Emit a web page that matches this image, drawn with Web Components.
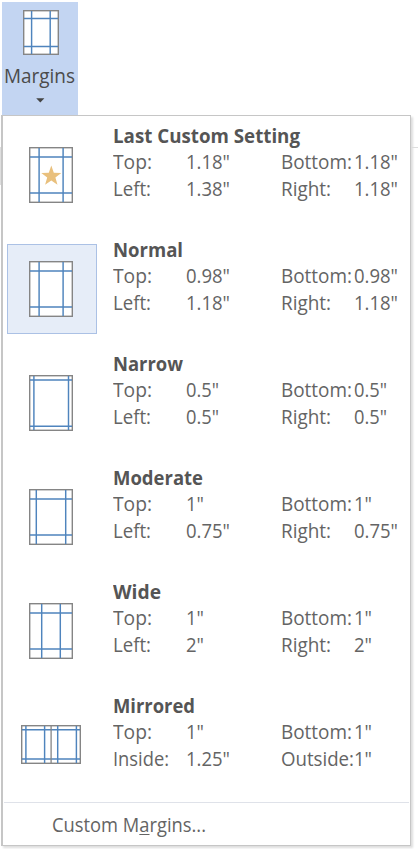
<!DOCTYPE html>
<html lang="en"><head><meta charset="utf-8"><title>Margins</title>
<style>html,body{margin:0;height:849px;overflow:hidden;background:#fff;font-family:"Open Sans","Noto Sans",sans-serif;color:#646464}</style></head>
<body><margins-app></margins-app>
<script>
// Text run condensed or expanded to a given width (w attribute, px).
class FitText extends HTMLElement{
  connectedCallback(){
    const r=this.attachShadow({mode:'open'});
    r.innerHTML='<style>:host{display:block;white-space:nowrap;width:0}span{display:inline-block;transform-origin:0 50%}</style><span><slot></slot></span>';
    const s=r.querySelector('span'),w=+this.getAttribute('w');
    if(w&&s.offsetWidth)s.style.transform='scaleX('+w/s.getBoundingClientRect().width+')';
  }
}
// Page thumbnail: size, vertical and horizontal guide positions.
class PageIcon extends HTMLElement{
  connectedCallback(){
    const [w,h]=this.getAttribute('size').split(' ').map(Number);
    const n=a=>(this.getAttribute(a)||'').split(' ').filter(Boolean).map(Number);
    const v=n('v').map(x=>`M${x} 1V${h-1}`).join(''),z=n('h').map(y=>`M1 ${y}H${w-1}`).join('');
    const mid=n('mid').map(x=>`<path d="M${x} 1V${h-1}" stroke="#858585" stroke-width="1.3"/>`).join('');
    const star=this.hasAttribute('star')?'<path d="M22.3 18.6L24.8 25.7L32.3 25.9L26.4 30.5L28.5 37.8L22.3 33.6L16.1 37.8L18.2 30.5L12.3 25.9L19.8 25.7Z" fill="#e9c07d"/>':'';
    this.attachShadow({mode:'open'}).innerHTML=`<style>:host{display:block;flex:none}svg{display:block}</style>
    <svg width="${w}" height="${h}" viewBox="0 0 ${w} ${h}" fill="none"><rect x=".7" y=".7" width="${w-1.4}" height="${h-1.4}" fill="#fff" stroke="#858585" stroke-width="1.4"/><path d="${v+z}" stroke="#4f84bd" stroke-width="1.45"/>${mid}${star}</svg>`;
  }
}
class MarginButton extends HTMLElement{
  connectedCallback(){
    this.attachShadow({mode:'open'}).innerHTML=`<style>:host{display:flex;flex-direction:column;align-items:flex-start;box-sizing:border-box;width:76px;height:113px;margin:2px 0 0 2px;background:#c3d5f2;padding-top:8px;color:#4b4b4b;font-size:20px;line-height:27px}
    page-icon{margin-left:21px}fit-text{margin:7px 0 0 2px}.a{margin:9px 0 0 34px;display:block}</style>
    <page-icon size="36 45" v="8.6 27.2" h="8.5 36.5"></page-icon><fit-text w="71">Margins</fit-text>
    <svg class="a" width="9" height="5"><path d="M.2 .3H8.4L4.3 4.6Z" fill="#444"/></svg>`;
  }
}
class MarginOption extends HTMLElement{
  connectedCallback(){
    const c=JSON.parse(this.getAttribute('data'));
    const t=(s,w,k)=>`<fit-text w="${w}" class="${k||''}">${s}</fit-text>`;
    const W={'Top:':39,'Left:':38,'Inside:':56,'Bottom:':71,'Right:':50,'Outside:':73,'1"':18,'2"':18,'0.5"':33};
    const cell=s=>t(s,W[s]||44);
    this.attachShadow({mode:'open'}).innerHTML=`<style>:host{display:grid;grid-template-columns:91px 1fr;column-gap:15px;height:114px;box-sizing:border-box;padding-left:4px}
    .pic{box-sizing:border-box;width:90px;height:90px;margin-top:14px;padding:0 2px 1px 0;display:flex;align-items:center;justify-content:center;border:1px solid transparent}
    .pic.sel{background:#e6edf8;border-color:#abc1e5}
    .txt{display:grid;grid-template-columns:73px 95px 73px 1fr;grid-template-rows:26px 27px 26px;align-content:start;padding-top:6px;font-size:20px;line-height:27px}
    .title{grid-column:1/-1;font-weight:700;color:#555}</style>
    <div class="pic ${c.sel?'sel':''}"><page-icon size="${c.size||'44 56'}" v="${c.v}" h="${c.h}" ${c.mid?`mid="${c.mid}"`:''} ${c.star?'star':''}></page-icon></div>
    <div class="txt">${t(c.name,c.w,'title')}${c.cells.map(cell).join('')}</div>`;
  }
}
class MarginMenu extends HTMLElement{
  connectedCallback(){
    const L=['Top:','Bottom:','Left:','Right:'];
    const o=(name,w,vals,v,h,x={})=>({name,w,v,h,cells:(x.labels||L).flatMap((l,i)=>[l,vals[i]]),...x});
    const items=[
      o('Last Custom Setting',187,['1.18"','1.18"','1.38"','1.18"'],'10.1 34.1','10 46',{star:1}),
      o('Normal',70,['0.98"','0.98"','1.18"','1.18"'],'10.1 34.1','10 46',{sel:1}),
      o('Narrow',70,['0.5"','0.5"','0.5"','0.5"'],'4.9 39.5','5 51.3'),
      o('Moderate',90,['1"','1"','0.75"','0.75"'],'7.3 36.7','10 46'),
      o('Wide',48,['1"','1"','2"','2"'],'12.7 31.3','10 46'),
      o('Mirrored',82,['1"','1"','1.25"','1"'],'4.9 23.6 36.7 55.4','4.7 34',{labels:['Top:','Bottom:','Inside:','Outside:'],size:'60 39',mid:'30.1'})];
    const esc=s=>s.replace(/&/g,'&amp;').replace(/"/g,'&quot;');
    this.attachShadow({mode:'open'}).innerHTML=`<style>:host{display:block;box-sizing:border-box;width:410px;height:731px;margin-left:1px;background:#fff;border:solid #c6c6c6;border-width:1px 1px 1px 2px;box-shadow:2px 2px 2px #dedede}
    .list{height:686px}.foot{border-top:1px solid #dfe2e9;margin:0 1px;padding:8px 0 0 48px;font-size:20px;line-height:27px}u{text-decoration-thickness:1px;text-underline-offset:2px;text-decoration-skip-ink:none}</style>
    <div class="list">${items.map(i=>`<margin-option data="${esc(JSON.stringify(i))}"></margin-option>`).join('')}</div>
    <div class="foot"><fit-text w="154">Custom M<u>a</u>rgins...</fit-text></div>`;
  }
}
class MarginsApp extends HTMLElement{
  connectedCallback(){
    this.attachShadow({mode:'open'}).innerHTML=`<style>:host{display:block;height:849px;background:linear-gradient(#dedede,#dedede) 0 145px/1px 38px no-repeat,linear-gradient(#ddd,#ddd) 411px 145px/7px 1px no-repeat,linear-gradient(#e5e5e5,#e5e5e5) 26px 847px/385px 2px no-repeat,#fff}</style><margin-button></margin-button><margin-menu></margin-menu>`;
  }
}
customElements.define('fit-text',FitText);
customElements.define('page-icon',PageIcon);
customElements.define('margin-button',MarginButton);
customElements.define('margin-option',MarginOption);
customElements.define('margin-menu',MarginMenu);
customElements.define('margins-app',MarginsApp);
</script></body></html>
